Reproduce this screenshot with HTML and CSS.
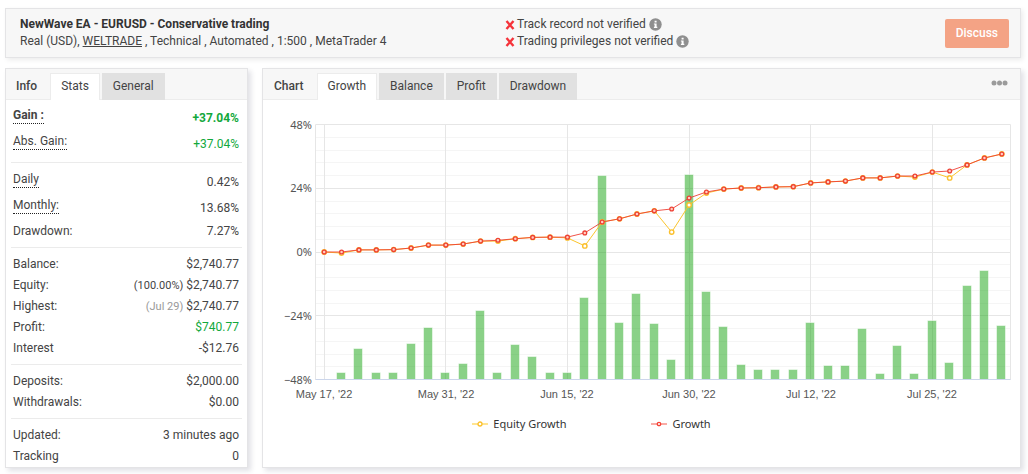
FILE: index.html
```html
<!DOCTYPE html>
<html lang="en">
<head>
<meta charset="utf-8">
<meta name="viewport" content="width=device-width, initial-scale=1">
<title>NewWave EA - EURUSD - Conservative trading</title>
<link rel="stylesheet" href="styles.css">
</head>
<body>
<svg class="defs" aria-hidden="true">
  <symbol id="cross" viewBox="0 0 10 10"><path d="M1.5 1 8.5 9M8.5 1 1.5 9" fill="none" stroke="#f5333a" stroke-width="2.4"/></symbol>
  <symbol id="info" viewBox="0 0 13 13"><circle cx="6.5" cy="6.5" r="6.2" fill="#8f8f8f"/><path d="M5.6 2.8h2v1.7h-2zM4.9 5.4h2.7v3.4h.7v1.2H4.9V8.8h.7V6.6h-.7z" fill="#fff"/></symbol>
</svg>

<header class="card account">
  <div class="account-main">
    <h1 class="account-name">NewWave EA - EURUSD - Conservative trading</h1>
    <p class="account-meta">Real (USD), <a class="broker" href="#">WELTRADE</a> , Technical , Automated , 1:500 , MetaTrader 4</p>
  </div>
  <ul class="checks">
    <li class="check"><svg class="cross"><use href="#cross"/></svg>Track record not verified<svg class="info"><use href="#info"/></svg></li>
    <li class="check"><svg class="cross"><use href="#cross"/></svg>Trading privileges not verified<svg class="info"><use href="#info"/></svg></li>
  </ul>
  <button class="discuss" type="button">Discuss</button>
</header>

<main class="panels">
  <section class="card">
    <div class="tabs">
      <h2 class="tabs-title">Info</h2>
      <button class="tab tab-active" type="button">Stats</button>
      <button class="tab" type="button">General</button>
    </div>
    <div class="stats">
      <dl class="group">
        <div class="row row-tall row-bold"><dt><span class="hint">Gain :</span></dt><dd class="up">+37.04%</dd></div>
        <div class="row row-tall"><dt><span class="hint">Abs. Gain:</span></dt><dd class="up">+37.04%</dd></div>
      </dl>
      <dl class="group">
        <div class="row row-tall"><dt><span class="hint">Daily</span></dt><dd>0.42%</dd></div>
        <div class="row row-tall"><dt><span class="hint">Monthly:</span></dt><dd>13.68%</dd></div>
        <div class="row"><dt>Drawdown:</dt><dd>7.27%</dd></div>
      </dl>
      <dl class="group">
        <div class="row"><dt>Balance:</dt><dd>$2,740.77</dd></div>
        <div class="row"><dt>Equity:</dt><dd><span class="note">(100.00%)</span> $2,740.77</dd></div>
        <div class="row"><dt>Highest:</dt><dd><span class="note note-light">(Jul 29)</span> $2,740.77</dd></div>
        <div class="row"><dt>Profit:</dt><dd class="up">$740.77</dd></div>
        <div class="row"><dt>Interest</dt><dd>-$12.76</dd></div>
      </dl>
      <dl class="group">
        <div class="row"><dt>Deposits:</dt><dd>$2,000.00</dd></div>
        <div class="row"><dt>Withdrawals:</dt><dd>$0.00</dd></div>
      </dl>
      <dl class="group">
        <div class="row"><dt>Updated:</dt><dd>3 minutes ago</dd></div>
        <div class="row"><dt>Tracking</dt><dd>0</dd></div>
      </dl>
    </div>
  </section>

  <section class="card chart-card">
    <div class="tabs">
      <h2 class="tabs-title">Chart</h2>
      <button class="tab tab-active" type="button">Growth</button>
      <button class="tab" type="button">Balance</button>
      <button class="tab" type="button">Profit</button>
      <button class="tab" type="button">Drawdown</button>
      <button class="more" type="button" aria-label="More"><svg width="17" height="6" viewBox="0 0 17 6" fill="#9b9b9b"><circle cx="3" cy="3" r="2.5"/><circle cx="8.5" cy="3" r="2.5"/><circle cx="14" cy="3" r="2.5"/></svg></button>
    </div>
    <div class="chart" id="chart"></div>
    <ul class="legend">
      <li class="legend-item"><svg class="key" viewBox="0 0 16 8"><path d="M0 4h16" stroke="#ffc107" stroke-opacity=".6" stroke-width="1.5"/><circle cx="8" cy="4" r="2" fill="#fff" stroke="#fbc02d" stroke-width="1.3"/></svg>Equity Growth</li>
      <li class="legend-item"><svg class="key" viewBox="0 0 16 8"><path d="M0 4h16" stroke="#f44336" stroke-opacity=".6" stroke-width="1.5"/><circle cx="8" cy="4" r="1.7" fill="#fff" stroke="#f44336" stroke-width="1.3"/></svg>Growth</li>
    </ul>
  </section>
</main>
<script src="chart.js"></script>
</body>
</html>
```
FILE: styles.css
```css
* { box-sizing: border-box; }

body {
  margin: 0;
  padding: 8px 7px 7px 5px;
  background: #fff;
  color: #444;
  font: 12px/17px Roboto, "Liberation Sans", sans-serif;
}

h1, h2, p, ul, dl, dd { margin: 0; padding: 0; }
ul { list-style: none; }
button { font: inherit; color: inherit; border: 0; cursor: pointer; }

.defs { display: none; }

.card {
  background: #fff;
  border: 1px solid #e4e4e6;
  box-shadow: 3px 3px 5px rgba(40, 40, 80, 0.14);
}

.account {
  display: grid;
  grid-template-columns: minmax(0, 523fr) minmax(0, 474fr) auto;
  align-items: center;
  min-height: 50px;
  padding: 0 11px 0 14px;
  background: #f7f7f7;
  box-shadow: 2px 2px 5px rgba(0, 0, 0, 0.08);
}

.account-name { font-size: 12px; font-weight: 700; line-height: 17px; color: #333; }
.broker { color: inherit; text-decoration: underline; }
.check { display: flex; align-items: center; }
.cross { width: 10px; height: 10px; margin-right: 2px; }
.info { width: 13px; height: 13px; margin-left: 3px; }

.discuss {
  padding: 6px 11px;
  border-radius: 2px;
  background: #f4a385;
  color: #fff;
  font-weight: 500;
}

.panels {
  display: grid;
  grid-template-columns: 243px minmax(0, 1fr);
  gap: 14px;
  margin-top: 10px;
}

.tabs {
  display: flex;
  align-items: flex-end;
  gap: 2px;
  height: 31px;
  background: #f7f7f7;
  box-shadow: inset 0 -1px #ececec;
}

.tabs-title {
  align-self: center;
  padding: 4px 11px 0 10px;
  font-size: 12px;
  font-weight: 500;
}

.chart-card .tabs-title { padding-left: 11px; }

.tab { height: 27px; padding: 0 11px; background: #e1e1e1; }

.tab-active {
  padding: 0 10px 1px;
  border: 1px solid #ececec;
  border-bottom: 0;
  background: #fff;
}

.more { display: flex; margin-left: auto; padding: 0 12px 14px; background: none; }

.stats { padding: 0 5px; }
.group { padding: 6px 2px 5px; border-bottom: 1px solid #ebebeb; }
.group:first-child { padding-top: 5px; }
.group:last-child { padding-bottom: 0; border-bottom: 0; }
.row { display: flex; align-items: center; justify-content: space-between; height: 21px; padding-right: 1px; }
.row-tall { height: 26px; }
.row-bold { font-weight: 700; }
.hint { display: block; margin-bottom: 5px; line-height: 15px; border-bottom: 1px dotted #222; }
.up { color: #12a83c; }
.note { font-size: 11px; }
.note-light { color: #999; }

.chart-card { display: flex; flex-direction: column; }
.chart { height: 311px; }
.chart-svg { display: block; width: 100%; height: 100%; }
.grid-major { stroke: #e6e6e6; }
.grid-minor { stroke: #f5f5f5; }
.axis { stroke: #ccd6eb; }
.bar { fill: #15a30f; fill-opacity: 0.5; stroke: #fff; stroke-opacity: 0.5; }
.line { fill: none; }
.line-equity { stroke: #fbc52d; }
.line-growth { stroke: #ee4035; stroke-opacity: 0.9; }
.dot-equity { fill: #fff; stroke: #fbc02d; stroke-width: 1.4; }
.dot-growth { fill: #ffd0c0; stroke: #ee4035; stroke-width: 1.3; }
.label { fill: #555; font-size: 11px; }
.label-y { font-family: "Noto Sans", sans-serif; text-anchor: end; }
.label-x { font-family: "Liberation Sans", sans-serif; text-anchor: middle; }

.legend {
  display: flex;
  justify-content: center;
  gap: 85px;
  padding: 4px 100px 0 0;
  color: #333;
  font: 11px/17px "Noto Sans", sans-serif;
}

.legend-item { display: flex; align-items: center; gap: 5px; }
.key { width: 16px; height: 8px; }
```
FILE: chart.js
```js
const growth = [0, 0, 0.8, 0.8, 0.9, 1.5, 2.6, 2.6, 3, 4.1, 4.4, 5, 5.5, 5.6, 5.6, 7.2, 11.3, 12.5, 14.3, 15.5,
  16.2, 20.3, 22.6, 23.7, 24.1, 24.2, 24.5, 24.6, 26, 26.4, 26.7, 27.9, 27.9, 28.6, 28.6, 30.1, 30.5, 32.8, 35.4, 36.9];
const equityGaps = { 1: -0.4, 10: 4.1, 14: 5.3, 15: 2.3, 20: 7.5, 21: 17.7, 22: 22.2, 34: 28.2, 36: 27.9 };
const equity = growth.map((v, i) => equityGaps[i] ?? v);
const bars = [0, 6, 30, 6, 6, 35, 51, 6, 15, 68, 6, 34, 22, 6, 6, 81, 203, 56, 85, 55,
  19, 204, 87, 52, 14, 9, 9, 9, 56, 13, 13, 50, 5, 33, 5, 58, 16, 93, 108, 53];
const dates = ["May 17, '22", "May 31, '22", "Jun 15, '22", "Jun 30, '22", "Jul 12, '22", "Jul 25, '22"];

const box = document.getElementById("chart");

function draw() {
  const width = box.clientWidth;
  const left = 52.5, right = width - 9.5, top = 24.5, bottom = 279.5;
  const step = (right - left) / growth.length;
  const x = i => left + step * (i + 0.5);
  const y = v => bottom - (v + 48) * (bottom - top) / 96;
  const snap = n => Math.floor(n) + 0.5;
  const line = (x1, y1, x2, y2, cls) => `<line x1="${x1}" y1="${y1}" x2="${x2}" y2="${y2}" class="${cls}"/>`;
  let out = "";

  for (let k = 0; k <= 20; k++) {
    const gy = snap(top + k * (bottom - top) / 20);
    out += line(left, gy, right, gy, k % 5 ? "grid-minor" : "grid-major");
  }
  dates.forEach((d, k) => {
    const gx = snap(x(k * 7));
    out += line(gx, top, gx, bottom, "grid-major");
    out += `<text x="${Math.round(x(k * 7))}" y="298" class="label label-x">${d}</text>`;
  });
  out += line(left, top, left, bottom, "grid-major") + line(right, top, right, bottom, "grid-major");
  [48, 24, 0, -24, -48].forEach(v => {
    out += `<text x="49" y="${Math.round(y(v)) + 4}" class="label label-y">${String(v).replace("-", "\u2212")}%</text>`;
  });

  const plot = (data, name, r) => {
    const pts = data.map((v, i) => [x(i), y(v)]);
    out += `<polyline points="${pts.join(" ")}" class="line line-${name}"/>`;
    out += pts.map(p => `<circle cx="${p[0]}" cy="${p[1]}" r="${r}" class="dot-${name}"/>`).join("");
  };
  bars.forEach((h, i) => {
    if (h) out += `<rect x="${snap(x(i) - 5)}" y="${bottom - h - 1}" width="9" height="${h + 1}" class="bar"/>`;
  });
  out += line(left, bottom, right, bottom, "axis");
  plot(equity, "equity", 2.2);
  plot(growth, "growth", 1.9);

  box.innerHTML = `<svg class="chart-svg" role="img" aria-label="Growth chart">${out}</svg>`;
}

draw();
window.addEventListener("resize", draw);
```
